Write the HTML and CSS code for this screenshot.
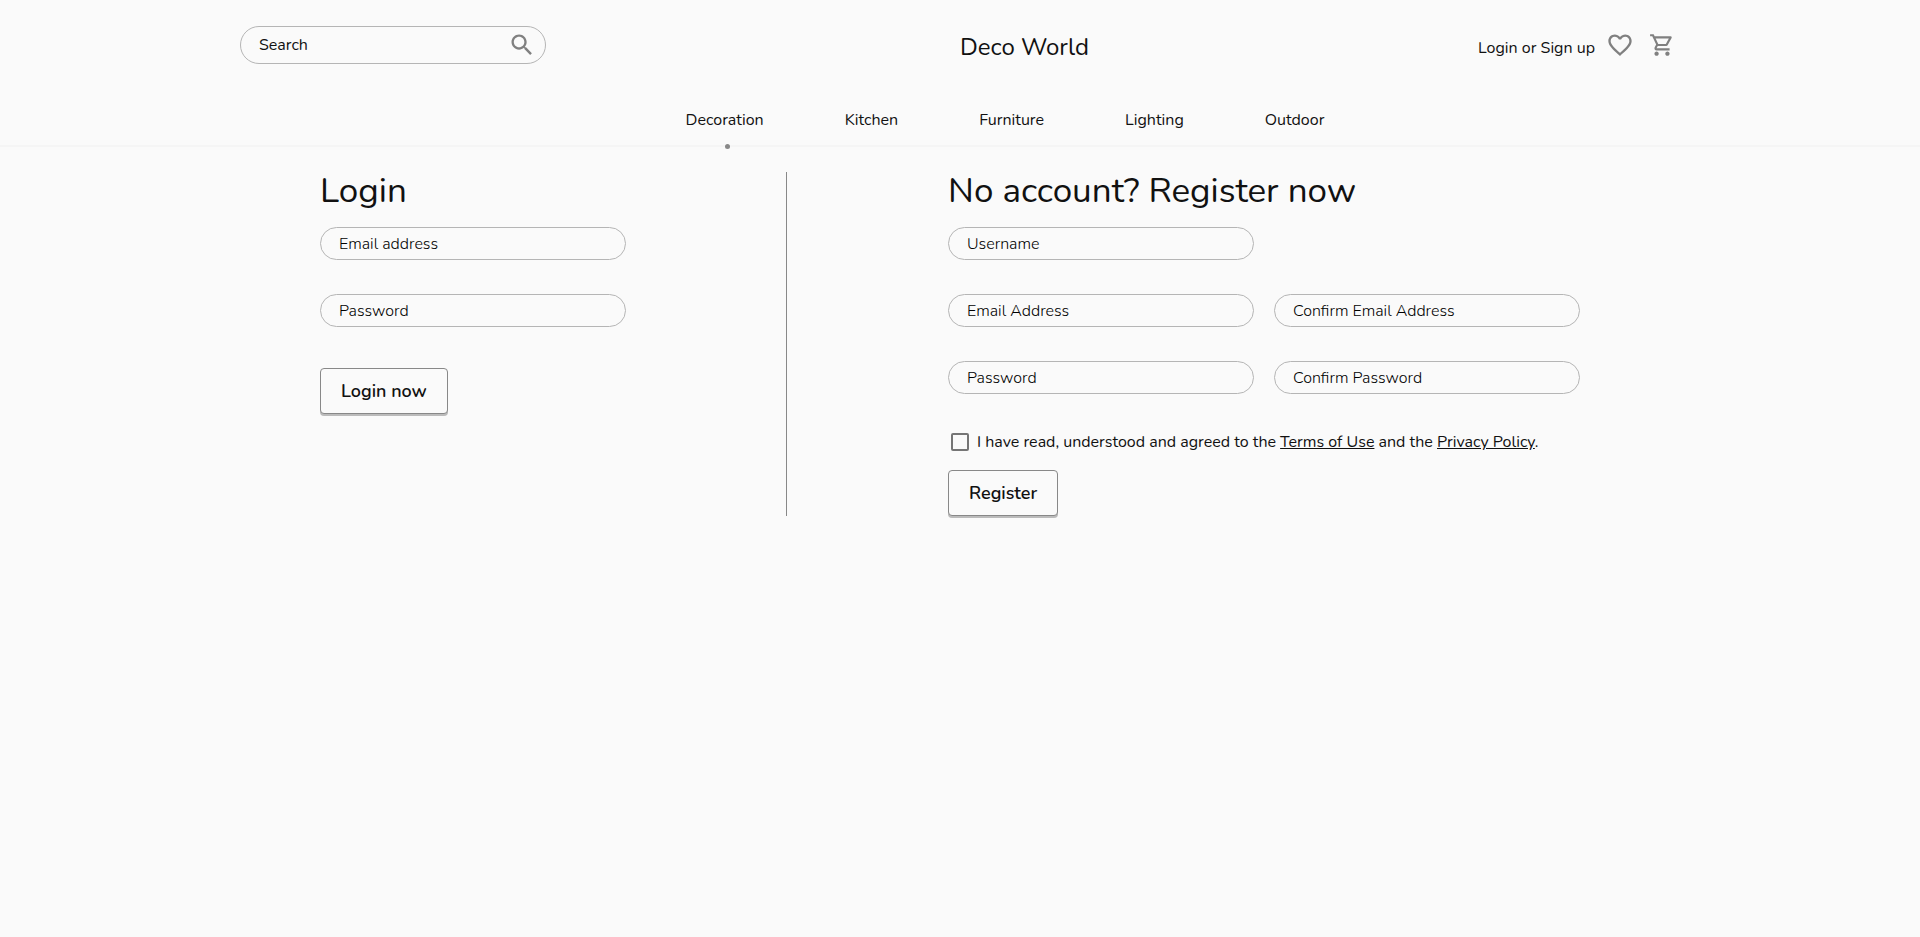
FILE: index.html
```html
<!DOCTYPE html>
<html lang="en">
<head>
<meta charset="utf-8">
<title>Deco World</title>
<link rel="stylesheet" href="styles.css">
</head>
<body>
<header class="header">
  <div class="topbar">
    <form class="search" role="search">
      <input class="search-input" type="search" placeholder="Search" aria-label="Search">
      <button class="icon-button" type="button" aria-label="Submit search">
        <svg class="icon" viewBox="0 0 24 24"><path d="M15.5 14h-.79l-.28-.27C15.41 12.59 16 11.11 16 9.5 16 5.91 13.09 3 9.5 3S3 5.91 3 9.5 5.91 16 9.5 16c1.61 0 3.09-.59 4.23-1.57l.27.28v.79l5 4.99L20.49 19l-4.99-5zm-6 0C7.01 14 5 11.99 5 9.5S7.01 5 9.5 5 14 7.01 14 9.5 11.99 14 9.5 14z"/></svg>
      </button>
    </form>
    <div class="topbar-main">
      <a class="brand" href="#">Deco World</a>
      <div class="account">
        <a class="account-link" href="#">Login or Sign up</a>
        <div class="account-icons">
          <a class="icon-link" href="#" aria-label="Wishlist">
            <svg class="icon" viewBox="0 0 24 24"><path d="M16.5 3c-1.74 0-3.41.81-4.5 2.09C10.91 3.81 9.24 3 7.5 3 4.42 3 2 5.42 2 8.5c0 3.78 3.4 6.86 8.55 11.54L12 21.35l1.45-1.32C18.6 15.36 22 12.28 22 8.5 22 5.42 19.58 3 16.5 3zm-4.4 15.55l-.1.1-.1-.1C7.14 14.24 4 11.39 4 8.5 4 6.5 5.5 5 7.5 5c1.54 0 3.04.99 3.57 2.36h1.87C13.46 5.99 14.96 5 16.5 5c2 0 3.5 1.5 3.5 3.5 0 2.89-3.14 5.74-7.9 10.05z"/></svg>
          </a>
          <a class="icon-link" href="#" aria-label="Shopping cart">
            <svg class="icon icon-cart" viewBox="0 0 24 24"><path d="M15.55 13c.75 0 1.41-.41 1.75-1.03l3.58-6.49c.37-.66-.11-1.48-.87-1.48H5.21l-.94-2H1v2h2l3.6 7.59-1.35 2.44C4.52 15.37 5.48 17 7 17h12v-2H7l1.1-2h7.45zM6.16 6h12.15l-2.76 5H8.53L6.16 6zM7 18c-1.1 0-1.99.9-1.99 2S5.9 22 7 22s2-.9 2-2-.9-2-2-2zm10 0c-1.1 0-1.99.9-1.99 2s.89 2 1.99 2 2-.9 2-2-.9-2-2-2z"/></svg>
          </a>
        </div>
      </div>
    </div>
  </div>
  <nav class="nav" aria-label="Categories">
    <a class="nav-link nav-link-active" href="#">Decoration</a>
    <a class="nav-link" href="#">Kitchen</a>
    <a class="nav-link" href="#">Furniture</a>
    <a class="nav-link" href="#">Lighting</a>
    <a class="nav-link" href="#">Outdoor</a>
  </nav>
</header>
<main class="main">
  <form class="panel login">
    <h1 class="title">Login</h1>
    <div class="fields">
      <input class="field" type="email" placeholder="Email address" aria-label="Email address">
      <input class="field" type="password" placeholder="Password" aria-label="Password">
    </div>
    <button class="button login-button" type="button">Login now</button>
  </form>
  <form class="panel register">
    <h1 class="title">No account? Register now</h1>
    <div class="fields">
      <input class="field" type="text" placeholder="Username" aria-label="Username">
      <div class="field-row">
        <input class="field" type="email" placeholder="Email Address" aria-label="Email Address">
        <input class="field" type="email" placeholder="Confirm Email Address" aria-label="Confirm Email Address">
      </div>
      <div class="field-row">
        <input class="field" type="password" placeholder="Password" aria-label="Password">
        <input class="field" type="password" placeholder="Confirm Password" aria-label="Confirm Password">
      </div>
    </div>
    <div class="terms">
      <input class="checkbox" type="checkbox" id="terms">
      <label for="terms">I have read, understood and agreed to the <a class="terms-link" href="#">Terms of Use</a> and the <a class="terms-link" href="#">Privacy Policy</a>.</label>
    </div>
    <button class="button" type="button">Register</button>
  </form>
</main>
</body>
</html>
```

FILE: styles.css
```css
* {
  box-sizing: border-box;
}

body {
  margin: 0;
  background: #fafafa;
  color: #111;
  font: 16px/24px Nunito, Lato, sans-serif;
}

a {
  color: inherit;
  text-decoration: none;
}

input,
button {
  font: inherit;
  color: inherit;
}

.header {
  border-bottom: 2px solid #f5f5f5;
}

.topbar {
  display: grid;
  grid-template-columns: 1fr 1fr;
  align-items: center;
  width: 75%;
  margin: 0 auto;
  padding-top: 26px;
}

.search {
  display: flex;
  align-items: center;
  width: 306px;
  height: 38px;
  padding: 0 9px 0 18px;
  border: 1px solid #b5b5b5;
  border-radius: 19px;
}

.search-input {
  flex: 1;
  min-width: 0;
  padding: 0;
  border: 0;
  outline: 0;
  background: none;
}

.search-input::placeholder {
  color: #111;
  opacity: 1;
}

.icon-button {
  display: flex;
  padding: 0;
  border: 0;
  background: none;
}

.icon {
  display: block;
  width: 28px;
  height: 28px;
  fill: #808080;
}

.icon-cart {
  width: 26px;
  height: 26px;
}

.topbar-main,
.account,
.account-icons {
  display: flex;
  align-items: center;
}

.topbar-main {
  justify-content: space-between;
}

.brand {
  padding-top: 4px;
  font-size: 24px;
  line-height: 32px;
}

.account {
  gap: 11px;
  padding-right: 5px;
}

.account-icons {
  gap: 15px;
}

.account-link {
  padding-top: 5px;
}

.nav {
  display: flex;
  justify-content: center;
  gap: 81px;
  padding: 44px 0 0 90px;
}

.nav-link {
  position: relative;
  padding-bottom: 13px;
}

.nav-link-active::after {
  content: "";
  position: absolute;
  left: 50%;
  bottom: -4px;
  width: 5px;
  height: 5px;
  border-radius: 50%;
  background: #888;
}

.main {
  display: grid;
  grid-template-columns: 466px 1fr;
  width: calc(75% - 160px);
  margin: 25px auto 0;
  padding-bottom: 24px;
}

.register {
  padding-left: 161px;
  border-left: 1px solid #888;
}

.title {
  margin: 0 0 17px;
  font-size: 35px;
  font-weight: 400;
  line-height: 38px;
}

.fields {
  display: grid;
  gap: 34px;
}

.field {
  width: 306px;
  height: 33px;
  padding: 0 18px;
  border: 1px solid #b5b5b5;
  border-radius: 17px;
  outline: 0;
  background: none;
}

.field::placeholder {
  color: #000;
  font-weight: 300;
  opacity: 1;
}

.field-row {
  display: flex;
  gap: 20px;
}

.terms {
  display: flex;
  align-items: center;
  gap: 8px;
  margin: 36px 0 16px 3px;
}

.terms-link {
  text-decoration: underline;
}

.checkbox {
  appearance: none;
  flex: none;
  width: 18px;
  height: 18px;
  margin: 0;
  border: 2px solid #757575;
  border-radius: 2px;
}

.button {
  display: block;
  height: 46px;
  padding: 0 20px;
  border: 1px solid #888;
  border-radius: 4px;
  background: #fafafa;
  box-shadow: 0 2px 0 #bbb;
  font-size: 18px;
  font-weight: 600;
}

.login-button {
  margin-top: 41px;
}
```
